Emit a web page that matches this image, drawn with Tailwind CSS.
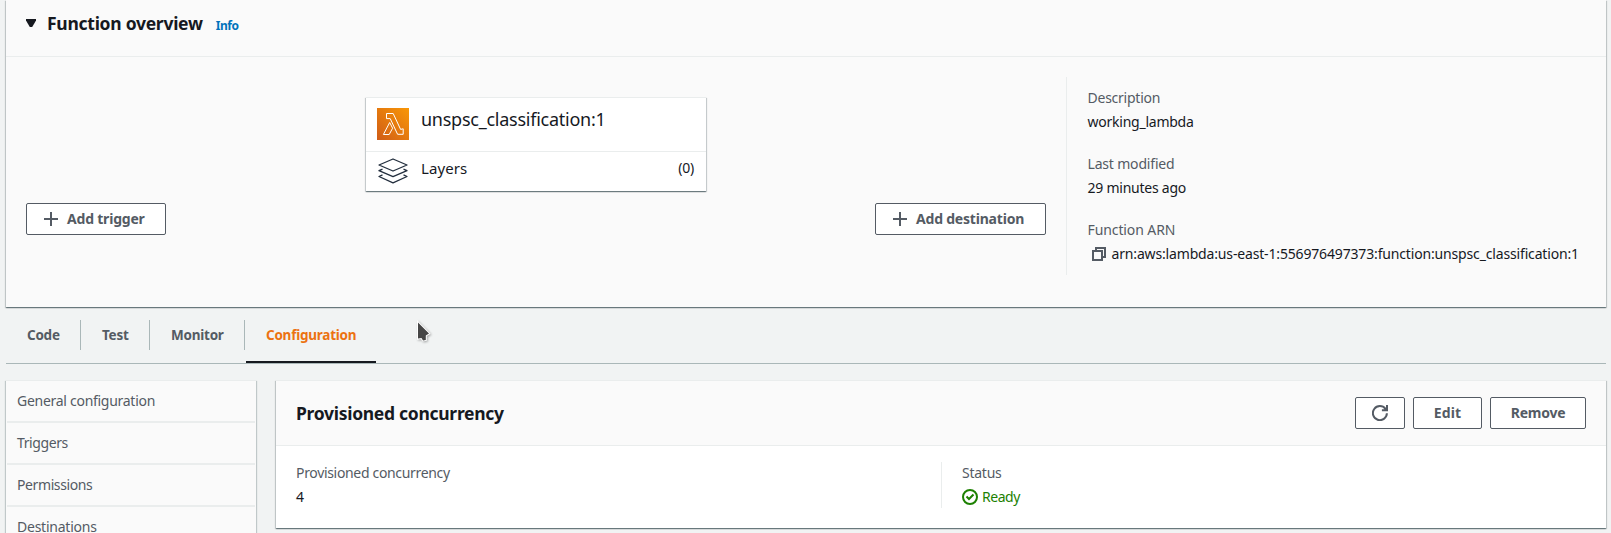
<!DOCTYPE html>
<html lang="en">
<head>
<meta charset="utf-8">
<title>Function overview</title>
<script src="https://cdn.jsdelivr.net/npm/@tailwindcss/browser@4"></script>
</head>
<body class="h-[533px] overflow-hidden bg-[#f1f3f3] pl-[6px] pr-[5px] font-['Noto_Sans',sans-serif] text-[14px] leading-[22px] tracking-[-0.24px] text-[#16191f] whitespace-nowrap">

<!-- Function overview -->
<section class="h-[307px] bg-[#fafafa] shadow-[0_1px_1px_0_rgba(0,28,36,0.4),1px_1px_1px_0_rgba(0,28,36,0.15),-1px_1px_1px_0_rgba(0,28,36,0.15)]">
  <header class="flex h-[57px] items-start border-b border-[#eaeded] pl-[20px] pt-[12px]">
    <svg class="mt-[7px] h-[9px] w-[10px]" viewBox="0 0 10 9"><path d="M0 0H10V1.5L6.2 8H3.8L0 1.5Z" fill="#16191f"/></svg>
    <h2 class="ml-[11px] text-[17.5px] font-bold tracking-[-0.27px]">Function overview</h2>
    <a class="ml-[13px] mt-[3px] text-[12px] font-bold tracking-[-0.4px] text-[#0073bb]">Info</a>
  </header>
  <div class="flex pt-[20px]">
    <div class="flex w-[1060px] pl-[20px]">
      <button class="mt-[126px] flex h-[32px] w-[140px] items-center rounded-[2px] border border-[#545b64] bg-white pl-[17px] font-bold tracking-[-0.2px] text-[#545b64]">
        <svg class="mr-[9px] h-[14px] w-[14px]" viewBox="0 0 14 14"><path d="M7 0V14M0 7H14" stroke="#545b64" stroke-width="2"/></svg>Add trigger
      </button>
      <div class="ml-[200px] mt-[20px] h-[94px] w-[340px] border-t border-[#eaeded] bg-white shadow-[0_1px_1px_0_rgba(0,28,36,0.4),1px_1px_1px_0_rgba(0,28,36,0.15),-1px_1px_1px_0_rgba(0,28,36,0.15)]">
        <div class="flex h-[54px] border-b border-[#eaeded] pl-[11px] pt-[10px]">
          <svg class="h-[32px] w-[32px]" viewBox="0 0 32 32">
            <defs><linearGradient id="g" x1="0" y1="1" x2="1" y2="0"><stop offset="0" stop-color="#d05c17"/><stop offset="1" stop-color="#f99706"/></linearGradient></defs>
            <rect width="32" height="32" fill="url(#g)"/>
            <path d="M9.5 5.5H16.2L23.6 21.4L26.2 20.8V26.3H20.6L13.2 10.6H9.5ZM12.7 14.5L15.6 20.2L12.2 26.5H6.4Z" fill="none" stroke="#fff" stroke-width="1"/>
          </svg>
          <h3 class="ml-[12px] text-[18px] tracking-[-0.25px]">unspsc_classification:1</h3>
        </div>
        <div class="flex h-[39px] pl-[12px] pr-[12px] pt-[5px]">
          <svg class="mt-px h-[26px] w-[30px]" viewBox="0 0 30 26" fill="none" stroke="#232f3e" stroke-width="1.3" stroke-linejoin="round">
            <path d="M1 7L15 1L29 7L15 13Z"/><path d="M4.500 11.200L1 12.700L15 18.700L29 12.700L25.500 11.200"/><path d="M4.500 16.900L1 18.500L15 24.900L29 18.500L25.500 16.900"/>
          </svg>
          <span class="ml-[13px] text-[15px] tracking-[0.1px]">Layers</span>
          <span class="ml-auto">(0)</span>
        </div>
      </div>
      <button class="ml-[169px] mt-[126px] flex h-[32px] w-[171px] items-center rounded-[2px] border border-[#545b64] bg-white pl-[17px] font-bold tracking-[-0.2px] text-[#545b64]">
        <svg class="mr-[9px] h-[14px] w-[14px]" viewBox="0 0 14 14"><path d="M7 0V14M0 7H14" stroke="#545b64" stroke-width="2"/></svg>Add destination
      </button>
    </div>
    <dl class="h-[198px] border-l border-[#eaeded] pl-[20.5px]">
      <div class="h-[66px] pt-[10px]"><dt class="text-[#545b64]">Description</dt><dd class="mt-[2px]">working_lambda</dd></div>
      <div class="h-[66px] pt-[10px]"><dt class="tracking-[-0.18px] text-[#545b64]">Last modified</dt><dd class="mt-[2px]">29 minutes ago</dd></div>
      <div class="h-[66px] pt-[10px]"><dt class="tracking-[-0.1px] text-[#545b64]">Function ARN</dt>
        <dd class="mt-[2px] flex tracking-[-0.16px]">
          <svg class="ml-[4.5px] mr-[5.5px] mt-[4px] h-[14px] w-[14px]" viewBox="0 0 14 14" fill="none" stroke="#545b64" stroke-width="2"><path d="M1 4H10V13H1ZM4 4V1H13V10H10"/></svg>arn:aws:lambda:us-east-1:556976497373:function:unspsc_classification:1
        </dd></div>
    </dl>
  </div>
</section>

<!-- Tabs -->
<nav class="flex h-[57px] border-b border-[#aab7b8] pt-[13px] text-[13.5px] font-bold tracking-[-0.24px] text-[#545b64]">
  <a class="h-[30px] w-[75px] border-r border-[#aab7b8] pl-[21px] pt-[4px]">Code</a>
  <a class="h-[30px] w-[69px] border-r border-[#aab7b8] pl-[21px] pt-[4px]">Test</a>
  <a class="h-[30px] w-[95px] border-r border-[#aab7b8] pl-[21px] pt-[4px]">Monitor</a>
  <a class="ml-[1px] h-[43px] w-[130px] border-b-2 border-[#16191f] pl-[20px] pt-[4px] text-[#ec7211]">Configuration</a>
</nav>

<div class="flex pt-[16px]">
  <!-- Section list -->
  <aside class="h-[160px] w-[250px] border-t border-[#eaeded] bg-[#fafafa] text-[#545b64] shadow-[1px_1px_1px_0_rgba(0,28,36,0.2),-1px_1px_1px_0_rgba(0,28,36,0.2)]">
    <div class="mx-px h-[42px] border-b-2 border-[#eaeded] pl-[10px] pt-[9px] tracking-[-0.28px]">General configuration</div>
    <div class="mx-px h-[42px] border-b-2 border-[#eaeded] pl-[10px] pt-[9px] tracking-[-0.4px]">Triggers</div>
    <div class="mx-px h-[42px] border-b-2 border-[#eaeded] pl-[10px] pt-[9px] tracking-[-0.4px]">Permissions</div>
    <div class="mx-px h-[42px] pl-[10px] pt-[9px]">Destinations</div>
  </aside>

  <!-- Provisioned concurrency -->
  <section class="ml-[20px] h-[148px] w-[1330px] border-t border-[#eaeded] bg-white shadow-[0_1px_1px_0_rgba(0,28,36,0.4),1px_1px_1px_0_rgba(0,28,36,0.15),-1px_1px_1px_0_rgba(0,28,36,0.15)]">
    <header class="flex h-[65px] items-center border-b border-[#eaeded] bg-[#fafafa] pl-[20px] pr-[20px]">
      <h2 class="text-[17.5px] font-bold tracking-[-0.29px]">Provisioned concurrency</h2>
      <button class="ml-auto flex h-[32px] w-[50px] items-center justify-center rounded-[2px] border border-[#545b64] bg-white">
        <svg class="h-[16px] w-[16px]" viewBox="0 0 16 16" fill="none" stroke="#545b64" stroke-width="2"><path d="M14.900 8.300A7 7 0 1 1 13.500 3.900L15 5.200M15 0V5.200H9.900"/></svg>
      </button>
      <button class="ml-[8px] h-[32px] w-[69px] rounded-[2px] border border-[#545b64] bg-white font-bold tracking-[0.2px] text-[#545b64]">Edit</button>
      <button class="ml-[8px] h-[32px] w-[96px] rounded-[2px] border border-[#545b64] bg-white font-bold text-[#545b64]">Remove</button>
    </header>
    <div class="flex pt-[16px]">
      <dl class="w-[665px] pl-[20px]"><dt class="tracking-[-0.33px] text-[#545b64]">Provisioned concurrency</dt><dd class="mt-[2px]">4</dd></dl>
      <dl class="h-[46px] border-l border-[#eaeded] pl-[20px]"><dt class="text-[#545b64]">Status</dt>
        <dd class="mt-[2px] flex tracking-[-0.45px] text-[#1d8102]">
          <svg class="mr-[4px] mt-[3px] h-[16px] w-[16px]" viewBox="0 0 16 16" fill="none" stroke="#1d8102" stroke-width="2"><circle cx="8" cy="8" r="7"/><path d="M4.500 7.500L7 10L11.500 5.500"/></svg>Ready
        </dd></dl>
    </div>
  </section>
</div>

<!-- Mouse pointer -->
<svg class="absolute left-[415px] top-[320px] h-[24px] w-[18px] drop-shadow-[1px_1px_1px_rgba(0,0,0,0.3)]" viewBox="0 0 18 24"><path d="M3 2.500L14 13.500L10.800 15.500L10.800 20L8 20.500L6.500 18L3 18.500Z" fill="#464646" stroke="#fff" stroke-width="2" paint-order="stroke"/></svg>
</body>
</html>
